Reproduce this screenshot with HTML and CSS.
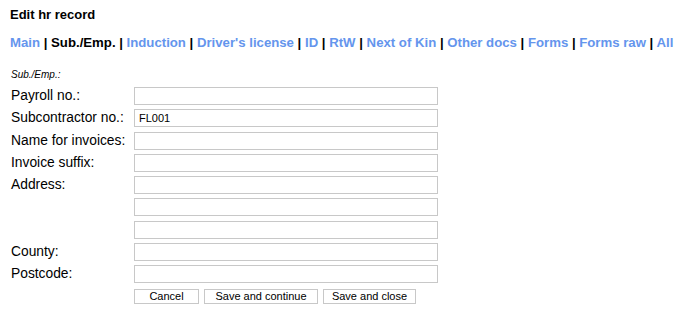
FILE: index.html
```html
<!DOCTYPE html>
<html>
<head>
<meta charset="utf-8">
<link rel="stylesheet" href="styles.css">
</head>
<body>
<h1 class="title">Edit hr record</h1>
<nav class="tabs">
<a href="#">Main</a> | <span class="current">Sub./Emp.</span> | <a href="#">Induction</a> | <a href="#">Driver's license</a> | <a href="#">ID</a> | <a href="#">RtW</a> | <a href="#">Next of Kin</a> | <a href="#">Other docs</a> | <a href="#">Forms</a> | <a href="#">Forms raw</a> | <a href="#">All</a>
</nav>
<div class="section">Sub./Emp.:</div>
<form class="form">
  <label class="lbl">Payroll no.:</label><input class="field" type="text">
  <label class="lbl">Subcontractor no.:</label><input class="field" type="text" value="FL001">
  <label class="lbl">Name for invoices:</label><input class="field" type="text">
  <label class="lbl">Invoice suffix:</label><input class="field" type="text">
  <label class="lbl">Address:</label><input class="field" type="text">
  <span class="lbl"></span><input class="field" type="text">
  <span class="lbl"></span><input class="field" type="text">
  <label class="lbl">County:</label><input class="field" type="text">
  <label class="lbl">Postcode:</label><input class="field" type="text">
  <span class="lbl"></span>
  <div class="buttons">
    <button type="button" class="btn btn-cancel">Cancel</button>
    <button type="button" class="btn btn-cont">Save and continue</button>
    <button type="button" class="btn btn-close">Save and close</button>
  </div>
</form>
</body>
</html>
```
FILE: styles.css
```css
html, body { margin: 0; padding: 0; background: #fff; }
body {
  font-family: "Liberation Sans", Arial, sans-serif;
  color: #000;
  padding: 7px 10px 0 10px;
}
.title {
  font-size: 13px;
  font-weight: bold;
  line-height: 15px;
  margin: 0;
}
.tabs {
  margin-top: 13px;
  font-size: 13.2px;
  font-weight: bold;
  line-height: 16px;
  color: #000;
  white-space: nowrap;
}
.tabs a { color: #6495ed; text-decoration: none; }
.tabs .current { color: #000; }
.section {
  margin-top: 18px;
  margin-left: 1px;
  font-size: 10px;
  font-style: italic;
  line-height: 12px;
}
.form {
  margin-top: 6px;
  margin-left: 1px;
  display: grid;
  grid-template-columns: 123px 304px;
  row-gap: 4.3px;
  align-items: center;
}
.lbl {
  font-size: 13.8px;
  line-height: 16px;
}
.field {
  box-sizing: border-box;
  width: 304px;
  height: 18px;
  margin: 0;
  border: 1px solid #c8c8c8;
  padding: 0 4px;
  font-family: "Liberation Sans", Arial, sans-serif;
  font-size: 11px;
  color: #000;
  outline: none;
}
.buttons {
  display: flex;
  gap: 5px;
  margin-top: 1px;
}
.btn {
  box-sizing: border-box;
  height: 15px;
  margin: 0;
  padding: 0;
  border: 1px solid #c8c8c8;
  background: #fff;
  font-family: "Liberation Sans", Arial, sans-serif;
  font-size: 11px;
  line-height: 13px;
  color: #000;
}
.btn-cancel { width: 65px; }
.btn-cont { width: 114px; }
.btn-close { width: 93px; }
```
